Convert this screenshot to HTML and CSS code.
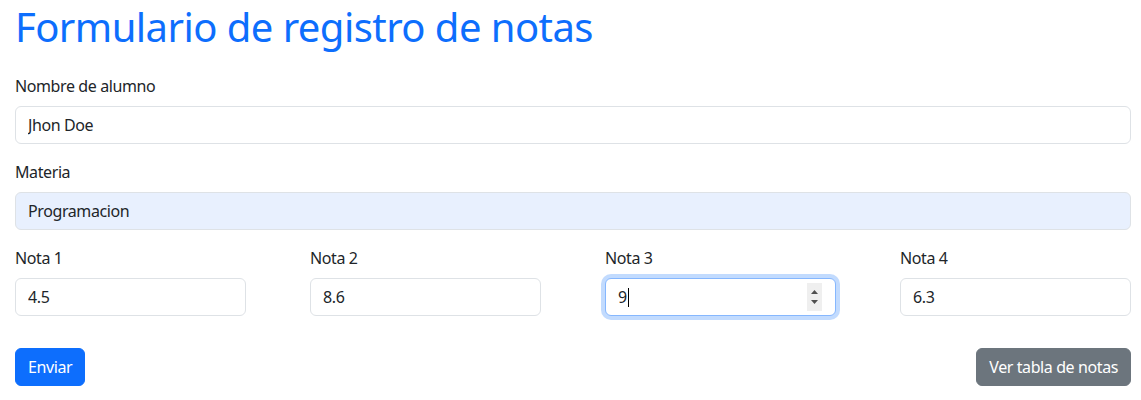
FILE: index.html
```html
<!DOCTYPE html>
<html lang="es">
<head>
<meta charset="utf-8">
<title>Formulario de registro de notas</title>
<link rel="stylesheet" href="styles.css">
</head>
<body>
<div class="container">
  <h1 class="title">Formulario de registro de notas</h1>
  <form class="form">
    <div class="field">
      <label class="label" for="nombre">Nombre de alumno</label>
      <input class="control" id="nombre" type="text" value="Jhon Doe">
    </div>
    <div class="field">
      <label class="label" for="materia">Materia</label>
      <input class="control autofill" id="materia" type="text" value="Programacion">
    </div>
    <div class="notes">
      <div class="note">
        <label class="label" for="n1">Nota 1</label>
        <input class="control small" id="n1" type="text" value="4.5">
      </div>
      <div class="note">
        <label class="label" for="n2">Nota 2</label>
        <input class="control small" id="n2" type="text" value="8.6">
      </div>
      <div class="note">
        <label class="label">Nota 3</label>
        <div class="control small focused">
          <span class="value">9</span><span class="caret"></span>
          <span class="spin">
            <svg width="15" height="28" viewBox="0 0 15 28"><rect width="15" height="28" fill="#efefef"/><path d="M4 11 L7.5 7 L11 11 Z" fill="#505050"/><path d="M4 17 L7.5 21 L11 17 Z" fill="#505050"/></svg>
          </span>
        </div>
      </div>
      <div class="note">
        <label class="label" for="n4">Nota 4</label>
        <input class="control small" id="n4" type="text" value="6.3">
      </div>
    </div>
    <div class="actions">
      <button type="button" class="btn primary">Enviar</button>
      <button type="button" class="btn secondary">Ver tabla de notas</button>
    </div>
  </form>
</div>
</body>
</html>
```

FILE: styles.css
```css
* { box-sizing: border-box; }
body {
  margin: 0;
  background: #fff;
  color: #212529;
  font-family: "Noto Sans", "Open Sans", sans-serif;
  font-size: 16px;
  line-height: 1.5;
  letter-spacing: -0.4px;
}
.container {
  padding: 0 10px 0 15px;
}
.title {
  margin: 0 0 23px;
  font-size: 40px;
  font-weight: 400;
  line-height: 1.2;
  letter-spacing: -0.55px;
  color: #0d6efd;
  padding-top: 3px;
}
.form { display: flex; flex-direction: column; }
.field { display: flex; flex-direction: column; margin-bottom: 16px; }
.label { display: block; margin-bottom: 8px; font-size: 16px; line-height: 24px; }
.control {
  display: flex;
  align-items: center;
  width: 100%;
  height: 38px;
  padding: 6px 12px;
  font: inherit;
  font-size: 16px;
  letter-spacing: -0.4px;
  color: #212529;
  background: #fff;
  border: 1px solid #dee2e6;
  border-radius: 6px;
  outline: none;
}
.autofill { background: #e8f0fe; }
.notes {
  display: grid;
  grid-template-columns: repeat(4, 295px);
  margin-bottom: 32px;
}
.note { display: flex; flex-direction: column; }
.small { width: 231px; }
.focused {
  border-color: #86b7fe;
  box-shadow: 0 0 0 4px rgba(13, 110, 253, .25);
  position: relative;
}
.caret {
  display: inline-block;
  width: 1px;
  height: 19px;
  background: #000;
  margin-left: 1px;
}
.spin {
  position: absolute;
  right: 13px;
  top: 4px;
  display: flex;
}
.actions {
  display: flex;
  justify-content: space-between;
}
.btn {
  height: 38px;
  padding: 6px 12px;
  font: inherit;
  font-size: 16px;
  line-height: 24px;
  letter-spacing: -0.4px;
  color: #fff;
  border: 1px solid transparent;
  border-radius: 6px;
}
.primary { background: #0d6efd; border-color: #0d6efd; }
.secondary { background: #6c757d; border-color: #6c757d; }
```
